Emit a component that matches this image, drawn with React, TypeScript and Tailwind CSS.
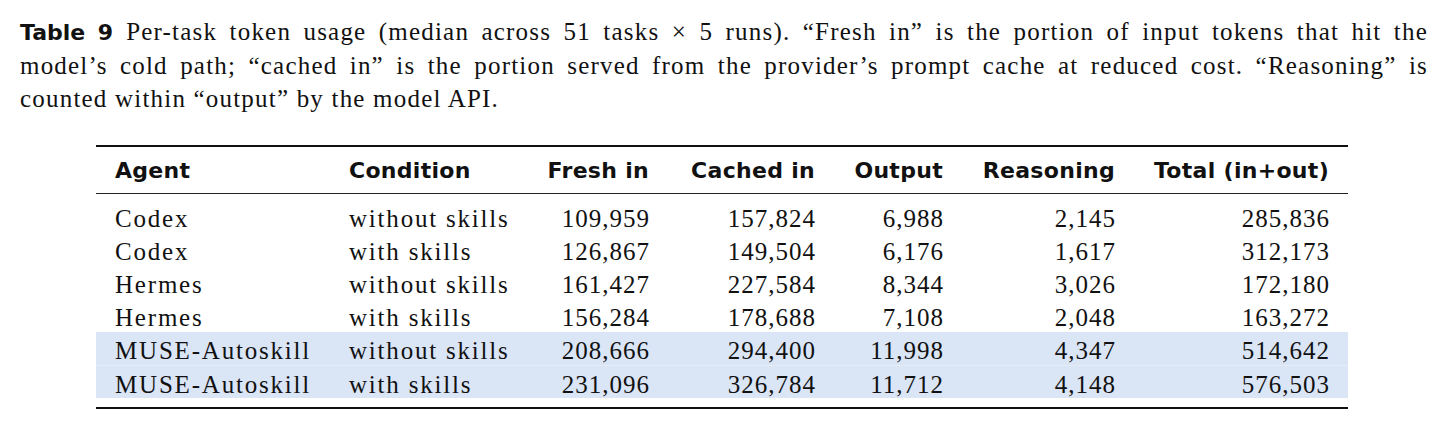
const serif = "font-['Liberation_Serif','Times_New_Roman',serif]";
const sans = "font-['DejaVu_Sans','Inter',sans-serif]";

interface Row {
  agent: string;
  condition: string;
  freshIn: string;
  cachedIn: string;
  output: string;
  reasoning: string;
  total: string;
  highlight?: boolean;
}

const rows: Row[] = [
  { agent: "Codex", condition: "without skills", freshIn: "109,959", cachedIn: "157,824", output: "6,988", reasoning: "2,145", total: "285,836" },
  { agent: "Codex", condition: "with skills", freshIn: "126,867", cachedIn: "149,504", output: "6,176", reasoning: "1,617", total: "312,173" },
  { agent: "Hermes", condition: "without skills", freshIn: "161,427", cachedIn: "227,584", output: "8,344", reasoning: "3,026", total: "172,180" },
  { agent: "Hermes", condition: "with skills", freshIn: "156,284", cachedIn: "178,688", output: "7,108", reasoning: "2,048", total: "163,272" },
  { agent: "MUSE-Autoskill", condition: "without skills", freshIn: "208,666", cachedIn: "294,400", output: "11,998", reasoning: "4,347", total: "514,642", highlight: true },
  { agent: "MUSE-Autoskill", condition: "with skills", freshIn: "231,096", cachedIn: "326,784", output: "11,712", reasoning: "4,148", total: "576,503", highlight: true },
];

const cols = "grid grid-cols-[234px_180px_120px_166px_128px_172px_214px] px-[19px]";
const num = "text-right tracking-[1px] -mr-[1px]";

const App = () => {
  return (
    <main className="w-[1443px] h-[426px] bg-white text-[#111] overflow-hidden">
      {/* Caption */}
      <div className={`${serif} pl-[20px] w-[1428px] pt-[15px] text-[25px] leading-[33px] tracking-[1.2px]`}>
        <p className="text-justify [text-align-last:justify] whitespace-nowrap">
          <span className={`${sans} font-bold text-[22px] tracking-normal mr-[13px]`}>Table 9</span>
          Per-task token usage (median across 51 tasks × 5 runs). “Fresh in” is the portion of input tokens that hit the
        </p>
        <p className="text-justify [text-align-last:justify] whitespace-nowrap">
          model’s cold path; “cached in” is the portion served from the provider’s prompt cache at reduced cost. “Reasoning” is
        </p>
        <p>counted within “output” by the model API.</p>
      </div>

      {/* Table */}
      <div className="ml-[96px] mt-[30px] w-[1252px] border-t-2 border-b-2 border-[#111]">
        <div className={`${cols} ${sans} h-[47px] items-center font-bold text-[22px] tracking-[0.3px] border-b-[1.5px] border-[#222]`}>
          <span>Agent</span>
          <span>Condition</span>
          <span className="text-right">Fresh in</span>
          <span className="text-right">Cached in</span>
          <span className="text-right">Output</span>
          <span className="text-right">Reasoning</span>
          <span className="text-right">Total (in+out)</span>
        </div>

        <div className={`${serif} pt-[6px] pb-[9px] text-[25px]`}>
          {rows.map((r, i) => (
            <div
              key={i}
              className={`${cols} h-[33px] items-center ${r.highlight ? "bg-[#dae5f6]" : ""} ${
                i === 5 ? "border-t border-[#e5ecf8]" : ""
              }`}
            >
              <span className="tracking-[1.8px] whitespace-nowrap">{r.agent}</span>
              <span className="tracking-[1.8px] whitespace-nowrap">{r.condition}</span>
              <span className={num}>{r.freshIn}</span>
              <span className={num}>{r.cachedIn}</span>
              <span className={num}>{r.output}</span>
              <span className={num}>{r.reasoning}</span>
              <span className={num}>{r.total}</span>
            </div>
          ))}
        </div>
      </div>
    </main>
  );
};

export default App;
